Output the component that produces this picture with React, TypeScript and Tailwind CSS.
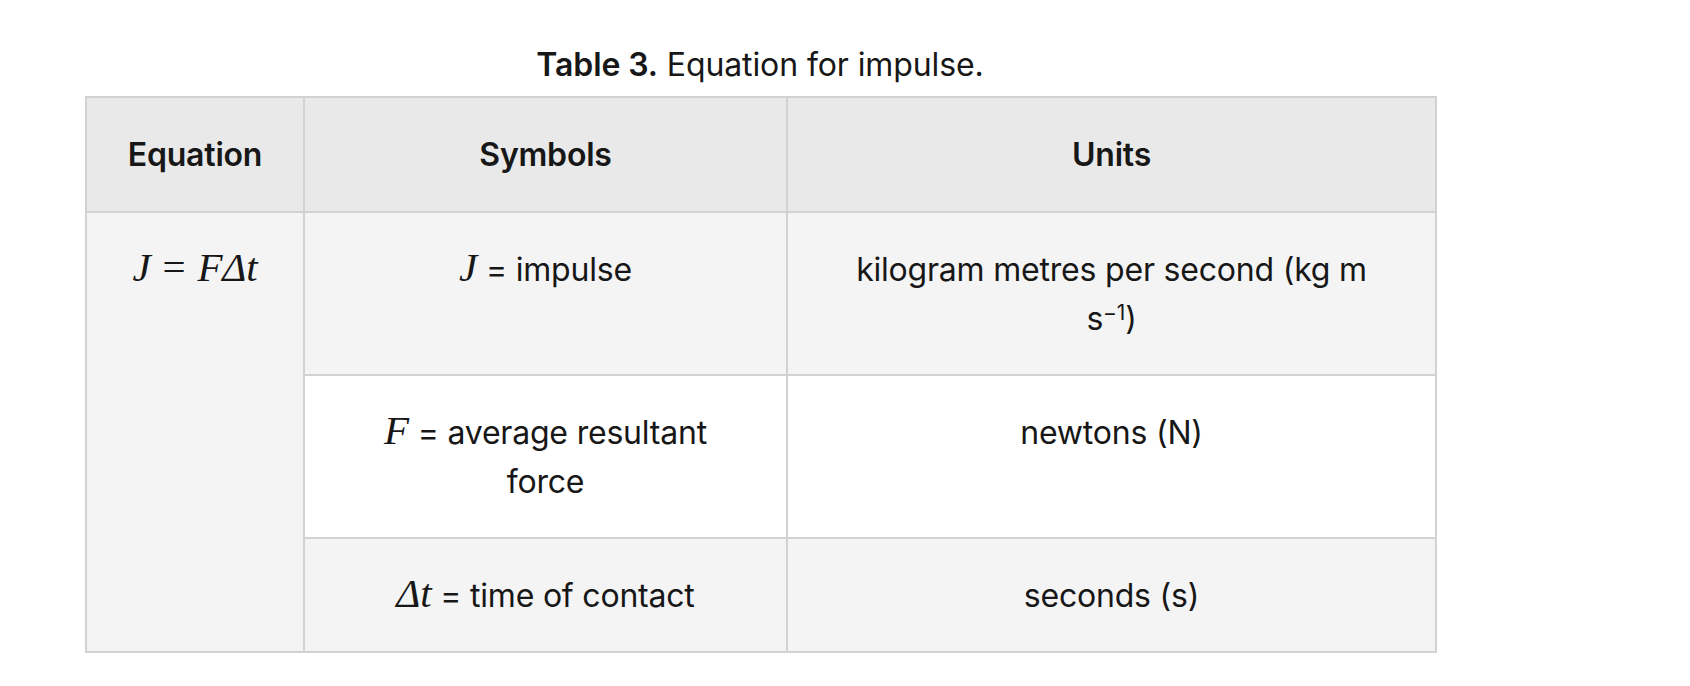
const sans = { fontFamily: "Inter, 'Liberation Sans', sans-serif" };

function M({ children }: { children: React.ReactNode }) {
  return <span className="font-['Liberation_Serif',serif] text-[41px] italic leading-none">{children}</span>;
}

export default function App() {
  return (
    <div className="min-h-screen bg-white pl-[85px] pt-[41px] text-[#171717]" style={sans}>
      <div className="w-[1350px]">
        <p className="mb-[7px] text-center text-[32px] leading-[48px] tracking-[-0.1px]">
          <span className="font-semibold">Table 3.</span> Equation for impulse.
        </p>
        <table className="w-[1350px] table-fixed border-collapse text-center text-[32px] leading-[49px] tracking-[-0.2px]">
          <colgroup>
            <col className="w-[218px]" />
            <col className="w-[483px]" />
            <col className="w-[649px]" />
          </colgroup>
          <thead>
            <tr className="bg-[#e9e9e9]">
              <th className="border-2 border-[#d2d2d2] px-4 py-[32px] font-semibold">Equation</th>
              <th className="border-2 border-[#d2d2d2] px-4 py-[32px] font-semibold">Symbols</th>
              <th className="border-2 border-[#d2d2d2] px-4 py-[32px] font-semibold">Units</th>
            </tr>
          </thead>
          <tbody>
            <tr className="bg-[#f4f4f4]">
              <td rowSpan={3} className="whitespace-nowrap border-2 border-[#d2d2d2] bg-[#f4f4f4] px-2 py-[32px] align-top">
                <M>J</M>
                <span className="mx-[12px] font-['Liberation_Serif',serif] text-[41px] leading-none">=</span>
                <M>F</M>
                <M>Δt</M>
              </td>
              <td className="border-2 border-[#d2d2d2] px-6 pt-[32px] pb-[31px] align-top">
                <M>J</M> = impulse
              </td>
              <td className="border-2 border-[#d2d2d2] px-6 pt-[32px] pb-[31px] align-top">
                kilogram metres per second (kg m
                <br />
                s<sup className="text-[21px]">−1</sup>)
              </td>
            </tr>
            <tr className="bg-white">
              <td className="border-2 border-[#d2d2d2] px-6 pt-[32px] pb-[31px] align-top">
                <M>F</M> = average resultant
                <br />
                force
              </td>
              <td className="border-2 border-[#d2d2d2] px-6 pt-[32px] pb-[31px] align-top">newtons (N)</td>
            </tr>
            <tr className="bg-[#f4f4f4]">
              <td className="border-2 border-[#d2d2d2] px-6 pt-[32px] pb-[31px] align-top">
                <M>Δt</M> = time of contact
              </td>
              <td className="border-2 border-[#d2d2d2] px-6 pt-[32px] pb-[31px] align-top">seconds (s)</td>
            </tr>
          </tbody>
        </table>
      </div>
    </div>
  );
}
